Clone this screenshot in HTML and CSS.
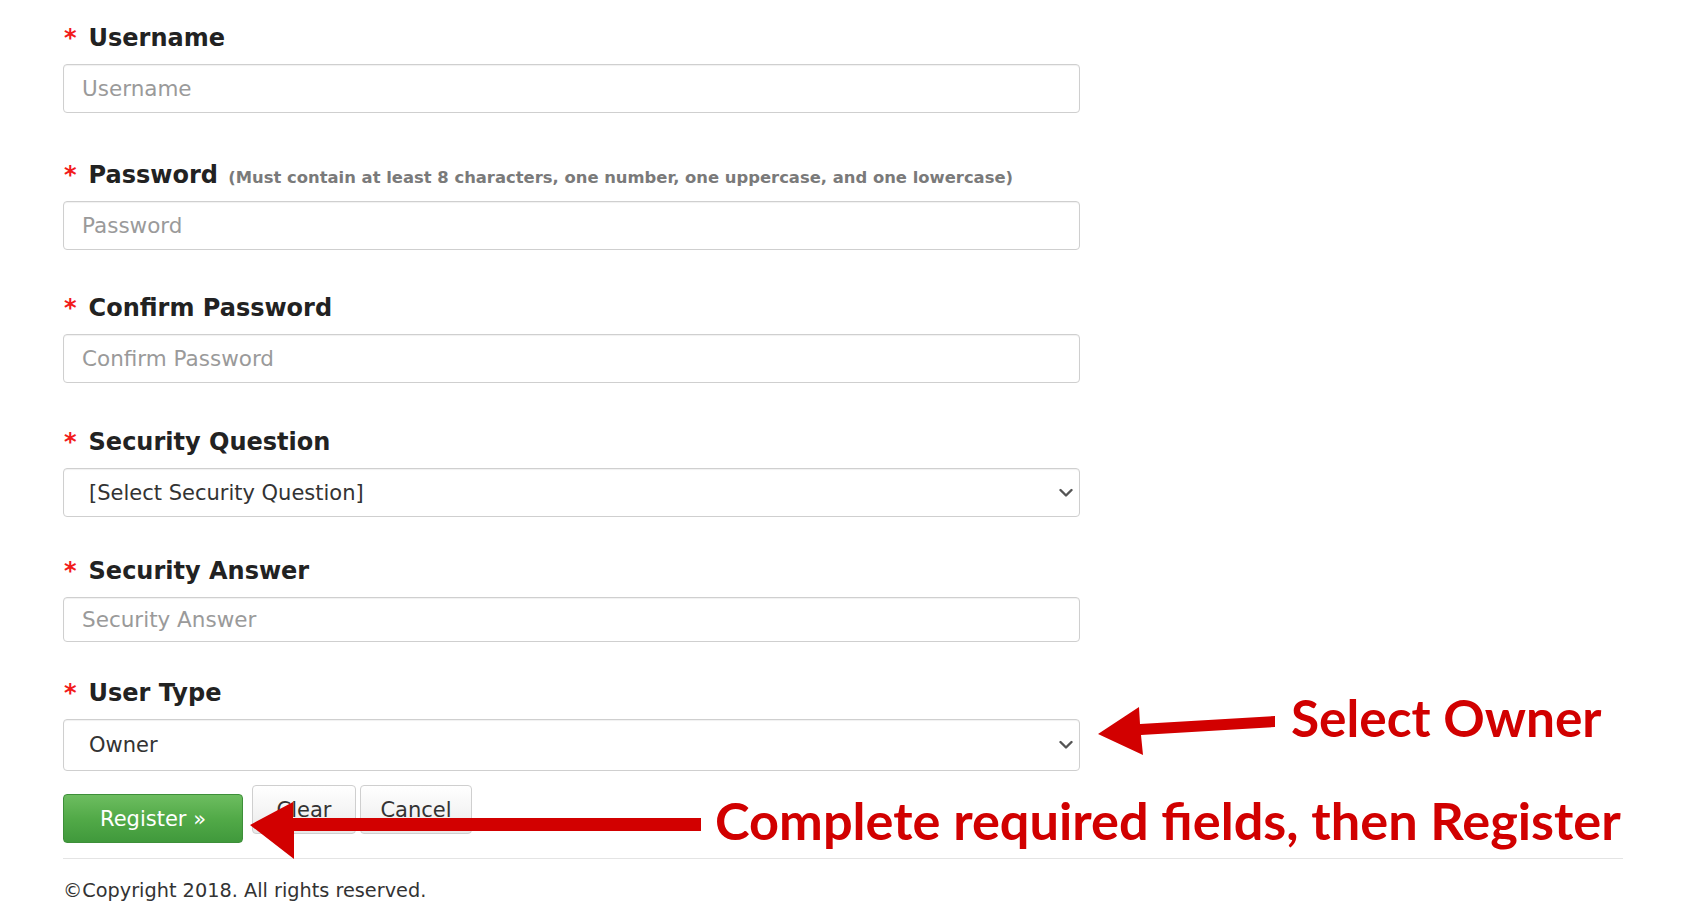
FILE: index.html
```html
<!DOCTYPE html>
<html lang="en">
<head>
<meta charset="utf-8">
<title>Register</title>
<link rel="stylesheet" href="styles.css">
</head>
<body>
<div class="page">
  <form class="form">
    <div class="fields">
      <div class="group">
        <label class="label"><span class="req">*</span>Username</label>
        <input class="input" type="text" placeholder="Username">
      </div>
      <div class="group">
        <label class="label"><span class="req">*</span>Password <span class="hint">(Must contain at least 8 characters, one number, one uppercase, and one lowercase)</span></label>
        <input class="input" type="password" placeholder="Password">
      </div>
      <div class="group">
        <label class="label"><span class="req">*</span>Confirm Password</label>
        <input class="input" type="password" placeholder="Confirm Password">
      </div>
      <div class="group">
        <label class="label"><span class="req">*</span>Security Question</label>
        <div class="select-wrap">
          <select class="select">
            <option>[Select Security Question]</option>
          </select>
          <svg class="chev" width="14" height="9" viewBox="0 0 14 9"><path d="M1.5 1.5 L7 7 L12.5 1.5" fill="none" stroke="#555" stroke-width="2.4" stroke-linecap="round" stroke-linejoin="round"/></svg>
        </div>
      </div>
      <div class="group">
        <label class="label"><span class="req">*</span>Security Answer</label>
        <input class="input input-sm" type="text" placeholder="Security Answer">
      </div>
      <div class="group">
        <label class="label"><span class="req">*</span>User Type</label>
        <div class="select-wrap">
          <select class="select select-lg">
            <option>Owner</option>
          </select>
          <svg class="chev" width="14" height="9" viewBox="0 0 14 9"><path d="M1.5 1.5 L7 7 L12.5 1.5" fill="none" stroke="#555" stroke-width="2.4" stroke-linecap="round" stroke-linejoin="round"/></svg>
        </div>
      </div>
    </div>
    <div class="actions">
      <button type="button" class="btn btn-primary">Register »</button>
      <button type="button" class="btn btn-default btn-clear">Clear</button>
      <button type="button" class="btn btn-default btn-cancel">Cancel</button>
    </div>
    <hr class="rule">
    <p class="copy">©Copyright 2018. All rights reserved.</p>
  </form>

  <svg class="arrows" width="1704" height="923" viewBox="0 0 1704 923">
    <polygon points="1098,734 1139,707 1140,724 1275,716 1275,727 1141,735 1143,755" fill="#d20000"/>
    <polygon points="250,825 293,802 293,818 701,818 701,831 294,831 294,859" fill="#d20000"/>
  </svg>
  <div class="note note-owner">Select Owner</div>
  <div class="note note-complete">Complete required fields, then Register</div>
</div>
</body>
</html>
```
FILE: styles.css
```css
html, body {
  margin: 0;
  padding: 0;
  background: #ffffff;
}

.page {
  position: relative;
  width: 1704px;
  height: 923px;
  overflow: hidden;
  font-family: "DejaVu Sans", Verdana, sans-serif;
  color: #333;
}

.form {
  padding: 23px 0 0 63px;
  margin: 0;
}

.fields {
  width: 1017px;
}

.group:nth-child(1) { margin-bottom: 47px; }
.group:nth-child(2) { margin-bottom: 43px; }
.group:nth-child(3) { margin-bottom: 44px; }
.group:nth-child(4) { margin-bottom: 39px; }
.group:nth-child(5) { margin-bottom: 36px; }

.label {
  display: block;
  font-weight: 700;
  font-size: 24px;
  line-height: 30px;
  color: #222;
  margin-bottom: 11px;
  white-space: nowrap;
}

.req {
  color: #f21b1b;
  margin-left: 1px;
  margin-right: 12px;
}

.hint {
  font-size: 16.4px;
  line-height: 16px;
  color: #7a7a7a;
  margin-left: 2px;
}

.input,
.select {
  display: block;
  width: 100%;
  height: 49px;
  box-sizing: border-box;
  border: 1px solid #cfcfcf;
  border-radius: 4px;
  box-shadow: inset 0 1px 1px rgba(0, 0, 0, 0.06);
  background: #fff;
  font-family: "DejaVu Sans", Verdana, sans-serif;
  font-size: 21px;
  color: #333;
  padding: 0 18px;
  margin: 0;
  outline: none;
}

.input {
  font-size: 21.5px;
}

.input::placeholder {
  color: #9a9a9a;
}

.input-sm {
  height: 45px;
}

.select {
  appearance: none;
  -webkit-appearance: none;
  padding-left: 25px;
}

.select-lg {
  height: 52px;
}

.select-wrap {
  position: relative;
}

.chev {
  position: absolute;
  right: 7px;
  top: 50%;
  transform: translateY(-50%);
}

.actions {
  display: flex;
  align-items: flex-start;
  margin-top: 14px;
}

.btn {
  height: 49px;
  box-sizing: border-box;
  border-radius: 4px;
  font-family: "DejaVu Sans", Verdana, sans-serif;
  font-size: 21px;
  padding: 0;
  margin: 0;
  cursor: pointer;
}

.btn-primary {
  width: 180px;
  margin-top: 9px;
  margin-right: 9px;
  color: #fff;
  background: linear-gradient(to bottom, #6dbd60 0%, #52aa48 50%, #40993c 100%);
  border: 1px solid #3d8f39;
}

.btn-default {
  color: #333;
  background: linear-gradient(to bottom, #ffffff 0%, #f3f3f3 60%, #e8e8e8 100%);
  border: 1px solid #cfcfcf;
  margin-right: 4px;
}

.btn-clear {
  width: 104px;
}

.btn-cancel {
  width: 112px;
}

.rule {
  width: 1560px;
  margin: 15px 0 0 0;
  border: 0;
  border-top: 1px solid #e4e4e4;
  height: 0;
}

.copy {
  margin: 20px 0 0 0;
  font-size: 19.3px;
  line-height: 24px;
  color: #333;
}

.arrows {
  position: absolute;
  left: 0;
  top: 0;
  pointer-events: none;
}

.note {
  position: absolute;
  font-family: Lato, "Open Sans", sans-serif;
  font-weight: 700;
  line-height: 52px;
  color: #d10000;
  white-space: nowrap;
}

.note-owner {
  left: 1291px;
  top: 691px;
  font-size: 51.4px;
}

.note-complete {
  left: 715px;
  top: 794px;
  font-size: 52.3px;
}
```
